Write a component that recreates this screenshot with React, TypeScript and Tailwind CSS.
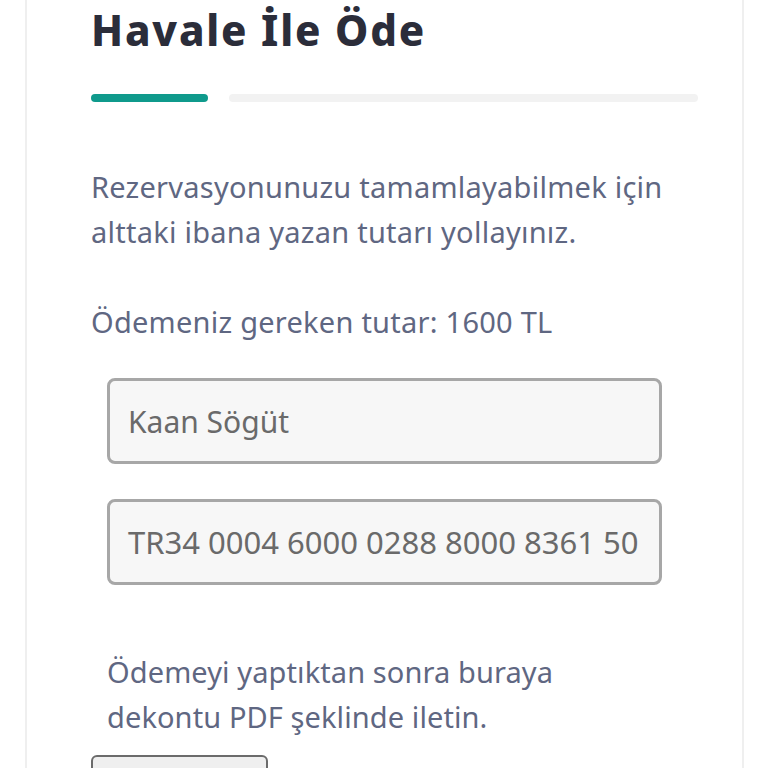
import React from "react";

const body = { fontFamily: '"Noto Sans", "Liberation Sans", sans-serif' };

export default function App() {
  return (
    <div className="min-h-[768px] bg-white overflow-hidden">
      <div
        className="mx-[25px] w-[719px] border-x-2 border-[#efefef] bg-white pl-[64px] pr-[44px]"
        style={body}
      >
        {/* Title */}
        <h1 className="pt-[2px] text-[42px] leading-[56px] font-extrabold text-[#2b2d3a] tracking-[1.8px]">
          Havale İle Öde
        </h1>

        {/* Progress */}
        <div className="mt-[36px] flex items-center gap-[21px]">
          <div className="h-[8px] w-[117px] rounded-full bg-[#0f9a8c]" />
          <div className="h-[8px] flex-1 rounded-full bg-[#f2f2f2]" />
        </div>

        {/* Info */}
        <p className="mt-[62px] w-[600px] text-[29px] leading-[45px] tracking-[0.25px] text-[#5f6782]">
          Rezervasyonunuzu tamamlayabilmek için alttaki ibana yazan tutarı yollayınız.
        </p>
        <p className="mt-[45px] text-[29px] leading-[45px] tracking-[0.25px] text-[#5f6782]">
          Ödemeniz gereken tutar: 1600 TL
        </p>

        {/* Account fields */}
        <div className="mt-[34px] ml-[16px] flex w-[555px] flex-col gap-[35px]">
          <div className="flex h-[86px] items-center rounded-lg border-[3px] border-[#a7a7a7] bg-[#f7f7f7] pl-[18px] text-[30px] text-[#6a6a6a]">
            Kaan Sögüt
          </div>
          <div className="flex h-[86px] items-center overflow-hidden whitespace-nowrap rounded-lg border-[3px] border-[#a7a7a7] bg-[#f7f7f7] pl-[18px] text-[31px] text-[#6a6a6a]">
            TR34 0004 6000 0288 8000 8361 50
          </div>
        </div>

        {/* Upload */}
        <p className="mt-[64px] ml-[16px] text-[29px] leading-[45px] tracking-[0.1px] text-[#5f6782]">
          Ödemeyi yaptıktan sonra buraya
          <br />
          dekontu PDF şeklinde iletin.
        </p>
        <button className="mt-[16px] h-[60px] w-[177px] rounded-md border-2 border-[#6b6b6b] bg-[#efefef]" />
      </div>
    </div>
  );
}
